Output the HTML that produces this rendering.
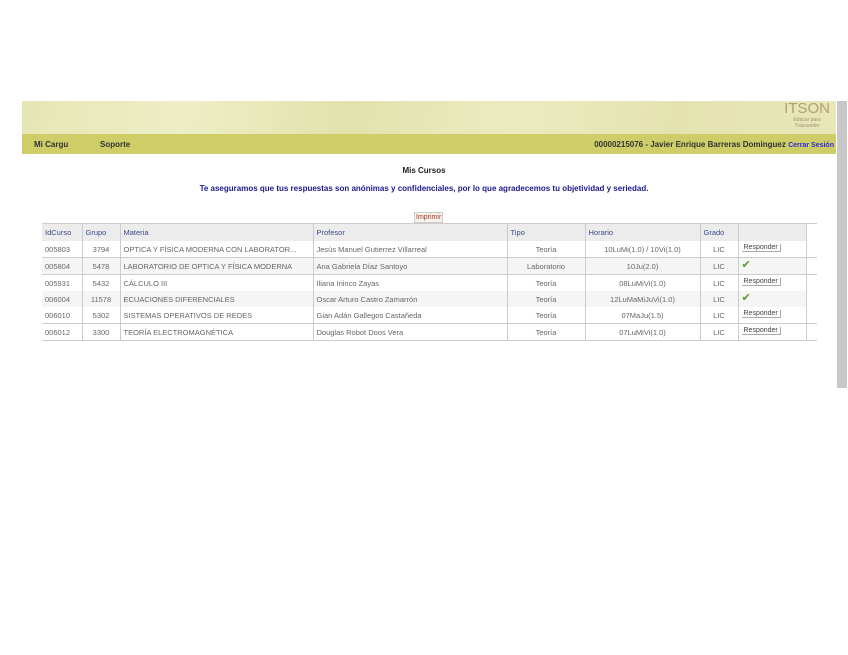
<!DOCTYPE html>
<html><head><meta charset="utf-8"><style>
body{margin:0;width:848px;height:655px;background:#fff;font-family:"Liberation Sans",sans-serif;position:relative;overflow:hidden}
.hdr{position:absolute;left:22px;top:101px;width:814px;height:33px;background:linear-gradient(100deg,#e6e6b4 0%,#eeeec6 20%,#e2e2ac 40%,#ecebc0 60%,#e4e3b0 80%,#e8e7b8 100%)}
.logo{position:absolute;right:6px;top:0;text-align:center;color:#b0a070;font-size:15px;line-height:16px}
.logo small{display:block;font-size:5px;line-height:6px;color:#a09070}
.nav{position:absolute;left:22px;top:134px;width:814px;height:20px;background:#cfcd68;font-size:8px;font-weight:bold;color:#333}
.nav span{position:absolute;top:6px}
.sb{position:absolute;left:837px;top:101px;width:10px;height:287px;background:#c8c8c8}
.t1{position:absolute;top:166px;left:0;width:848px;text-align:center;font-size:8px;font-weight:bold;color:#222}
.t2{position:absolute;top:184px;left:0;width:848px;text-align:center;font-size:8px;font-weight:bold;color:#1a1a8a}
.imp{position:absolute;left:414px;top:212px;font-size:7px;color:#a33;border:1px solid #ccc;background:#f4f4e8;padding:0 1px;line-height:9px}
table{position:absolute;left:42px;top:223px;width:775px;table-layout:fixed;border-collapse:collapse;font-size:7.5px;color:#666;border-top:1px solid #ccc;border-bottom:1px solid #ccc}
td{height:16px;padding:0 3px;border-left:1px solid #ccc;white-space:nowrap;overflow:hidden}
tr.h td{background:#ececec;color:#3a4a8a;height:17px}
tr.g td{background:#f5f5f5}
tr.b td{border-top:1px solid #ccc}
.c{text-align:center}
.btn{display:inline-block;border:1px solid #aaa;border-width:0 1px 1px 0;font-size:7px;color:#444;padding:0 2px;vertical-align:top;margin-top:-1px}
.ck{color:#5a9a2a;font-size:11px;vertical-align:top;margin-top:-3px;display:inline-block}
</style></head><body>
<div class="hdr"><div class="logo">ITSON<small>Educar para<br>Trascender</small></div></div>
<div class="nav"><span style="left:12px">Mi Cargu</span><span style="left:78px">Soporte</span><span style="right:2px">00000215076 - Javier Enrique Barreras Dominguez <span style="position:static;color:#2b2bd0;font-size:7px">Cerrar Sesión</span></span></div>
<div class="sb"></div>
<div class="t1">Mis Cursos</div>
<div class="t2">Te aseguramos que tus respuestas son anónimas y confidenciales, por lo que agradecemos tu objetividad y seriedad.</div>
<div class="imp">Imprimir</div>
<table>
<colgroup><col style="width:40px"><col style="width:38px"><col style="width:193px"><col style="width:194px"><col style="width:78px"><col style="width:115px"><col style="width:38px"><col style="width:68px"><col style="width:11px"></colgroup>
<tr class="h"><td style="border-left:0">IdCurso</td><td>Grupo</td><td>Materia</td><td>Profesor</td><td>Tipo</td><td>Horario</td><td>Grado</td><td></td><td style="background:#fff"></td></tr>
<tr><td style="border-left:0">005803</td><td class="c">3794</td><td>OPTICA Y FÍSICA MODERNA CON LABORATOR...</td><td>Jesús Manuel Gutierrez Villarreal</td><td class="c">Teoría</td><td class="c">10LuMi(1.0) / 10Vi(1.0)</td><td class="c">LIC</td><td><span class="btn">Responder</span></td><td></td></tr>
<tr class="g b"><td style="border-left:0">005804</td><td class="c">5478</td><td>LABORATORIO DE OPTICA Y FÍSICA MODERNA</td><td>Ana Gabriela Díaz Santoyo</td><td class="c">Laboratorio</td><td class="c">10Ju(2.0)</td><td class="c">LIC</td><td><span class="ck">✔</span></td><td style="background:#fff"></td></tr>
<tr class="b"><td style="border-left:0">005931</td><td class="c">5432</td><td>CÁLCULO III</td><td>Iliana Iriinco Zayas</td><td class="c">Teoría</td><td class="c">08LuMiVi(1.0)</td><td class="c">LIC</td><td><span class="btn">Responder</span></td><td></td></tr>
<tr class="g"><td style="border-left:0">006004</td><td class="c">11578</td><td>ECUACIONES DIFERENCIALES</td><td>Oscar Arturo Castro Zamarrón</td><td class="c">Teoría</td><td class="c">12LuMaMiJuVi(1.0)</td><td class="c">LIC</td><td><span class="ck">✔</span></td><td style="background:#fff"></td></tr>
<tr><td style="border-left:0">006010</td><td class="c">5302</td><td>SISTEMAS OPERATIVOS DE REDES</td><td>Gian Adán Gallegos Castañeda</td><td class="c">Teoría</td><td class="c">07MaJu(1.5)</td><td class="c">LIC</td><td><span class="btn">Responder</span></td><td></td></tr>
<tr class="b"><td style="border-left:0">006012</td><td class="c">3300</td><td>TEORÍA ELECTROMAGNÉTICA</td><td>Douglas Robot Doos Vera</td><td class="c">Teoría</td><td class="c">07LuMiVi(1.0)</td><td class="c">LIC</td><td><span class="btn">Responder</span></td><td></td></tr>
</table>
</body></html>
